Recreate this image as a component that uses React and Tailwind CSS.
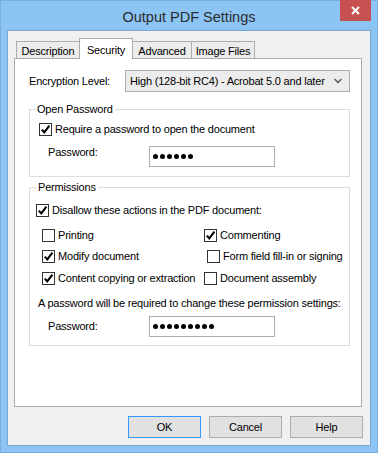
import React from "react";

const font = { fontFamily: '"Liberation Sans", Arial, sans-serif' };

function Box({ on }) {
  return (
    <span className="w-[13px] h-[13px] border border-[#333333] bg-white flex items-center justify-center shrink-0">
      {on && (
        <svg width="11" height="11" viewBox="0 0 11 11">
          <path d="M1.8 5.6 L4.3 8.4 L9.4 1.6" stroke="#000" strokeWidth="2.1" fill="none" />
        </svg>
      )}
    </span>
  );
}

function Check({ on, label, className = "" }) {
  return (
    <div className={`flex items-center gap-[3px] h-[14px] whitespace-nowrap ${className}`}>
      <Box on={on} />
      <span className="leading-[14px]">{label}</span>
    </div>
  );
}

function Dots({ n }) {
  return (
    <div className="flex items-center gap-[2px] pl-[3px] h-full">
      {Array.from({ length: n }).map((_, i) => (
        <span key={i} className="w-[5px] h-[5px] rounded-full bg-black" />
      ))}
    </div>
  );
}

function Tab({ label, active, className = "" }) {
  return active ? (
    <div className={`h-[21px] bg-white border border-b-0 border-[#acacac] flex items-start justify-center pt-[3px] z-10 whitespace-nowrap ${className}`}>
      {label}
    </div>
  ) : (
    <div className={`h-[17px] mb-[1px] bg-[#ececec] border border-b-0 border-[#acacac] flex items-center justify-center pt-[2px] whitespace-nowrap ${className}`}>
      {label}
    </div>
  );
}

export default function App() {
  return (
    <div
      className="w-[378px] h-[453px] bg-[#8cc4f4] border border-[#78b0e2] flex flex-col text-[11px] tracking-[-0.2px] text-black"
      style={font}
    >
      {/* TITLE BAR */}
      <div className="h-[29px] flex items-start relative">
        <div className="flex-1 text-center text-[14.5px] tracking-normal text-[#2b2b2b] pt-[6px]">Output PDF Settings</div>
        <div className="absolute right-[6px] top-[-1px] w-[31px] h-[21px] bg-[#c75050] flex items-center justify-center">
          <svg width="9" height="9" viewBox="0 0 9 9">
            <path d="M1 1 L8 8 M8 1 L1 8" stroke="#fff" strokeWidth="2" />
          </svg>
        </div>
      </div>

      {/* CLIENT */}
      <div className="flex-1 mx-[6px] mb-[6px] bg-[#f0f0f0] border border-[#7aa7d2] flex flex-col">
        {/* TABS */}
        <div className="flex items-end pl-[8px] pt-[7px] -mb-px relative z-10">
          <Tab label="Description" className="w-[64px]" />
          <Tab label="Security" active className="w-[54px] -ml-px" />
          <Tab label="Advanced" className="w-[60px] -ml-px" />
          <Tab label="Image Files" className="w-[64px] -ml-px" />
        </div>

        {/* PANEL */}
        <div className="ml-[6px] w-[348px] h-[349px] bg-white border border-[#acacac] pl-[14px]">
          <div className="flex items-center mt-[11px] whitespace-nowrap">
            <span className="w-[96px]">Encryption Level:</span>
            <div className="w-[225px] h-[22px] bg-[#ececec] border border-[#acacac] flex items-center pl-[4px] pr-[7px]">
              <span className="flex-1">High (128-bit RC4) - Acrobat 5.0 and later</span>
              <svg width="8" height="6" viewBox="0 0 8 6">
                <path d="M0.5 1 L4 4.5 L7.5 1" stroke="#555" strokeWidth="1.4" fill="none" />
              </svg>
            </div>
          </div>

          {/* OPEN PASSWORD */}
          <fieldset className="w-[321px] mt-[10px] border border-[#dcdcdc] pb-[9px]">
            <legend className="ml-[5px] px-[2px] leading-[14px]">Open Password</legend>
            <Check on label="Require a password to open the document" className="mt-[6px] ml-[9px]" />
            <div className="flex items-start mt-[10px] ml-[18px]">
              <span className="w-[101px] -mt-px leading-[14px]">Password:</span>
              <div className="w-[126px] h-[21px] border border-[#abadb3] bg-white">
                <Dots n={6} />
              </div>
            </div>
          </fieldset>

          {/* PERMISSIONS */}
          <fieldset className="w-[321px] mt-[3px] border border-[#dcdcdc] pb-[8px]">
            <legend className="ml-[6px] px-[2px] leading-[14px]">Permissions</legend>
            <Check on label="Disallow these actions in the PDF document:" className="mt-[9px] ml-[6px]" />
            <div className="grid grid-cols-[162px_1fr] ml-[12px] mt-[11px] gap-y-[7px]">
              <Check label="Printing" />
              <Check on label="Commenting" />
              <Check on label="Modify document" />
              <Check label="Form field fill-in or signing" className="ml-[3px]" />
              <Check on label="Content copying or extraction" className="mt-px" />
              <Check label="Document assembly" className="mt-px" />
            </div>
            <div className="ml-[8px] mt-[11px] leading-[14px] whitespace-nowrap">
              A password will be required to change these permission settings:
            </div>
            <div className="flex items-center mt-[6px] ml-[18px]">
              <span className="w-[101px]">Password:</span>
              <div className="w-[126px] h-[21px] border border-[#abadb3] bg-white">
                <Dots n={9} />
              </div>
            </div>
          </fieldset>
        </div>

        {/* BUTTONS */}
        <div className="flex justify-end gap-[8px] pr-[7px] mt-[9px]">
          <button className="w-[73px] h-[22px] bg-[#e1e1e1] border border-[#3399ff]">OK</button>
          <button className="w-[73px] h-[22px] bg-[#e1e1e1] border border-[#adadad]">Cancel</button>
          <button className="w-[73px] h-[22px] bg-[#e1e1e1] border border-[#adadad]">Help</button>
        </div>
      </div>
    </div>
  );
}
